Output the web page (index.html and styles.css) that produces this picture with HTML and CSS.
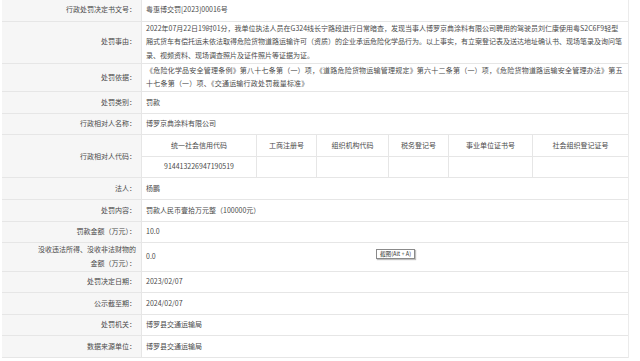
FILE: index.html
```html
<!DOCTYPE html>
<html lang="zh-CN">
<head>
<meta charset="utf-8">
<title>行政处罚决定书</title>
<link rel="stylesheet" href="styles.css">
</head>
<body>
<div class="sheet">
  <div class="row"><div class="lbl">行政处罚决定书文号：</div><div class="val">粤惠博交罚[2023]00016号</div></div>
  <div class="row"><div class="lbl">处罚事由：</div><div class="val"><p class="txt">2022年07月22日19时01分，我单位执法人员在G324线长宁路段进行日常暗查，发现当事人博罗京典涂料有限公司聘用的驾驶员刘仁康使用粤S2C6F9轻型<br>厢式货车有偿托运未依法取得危险货物道路运输许可（资质）的企业承运危险化学品行为。以上事实，有立案登记表及送达地址确认书、现场笔录及询问笔<br>录、视频资料、现场调查照片及证件照片等证据为证。</p></div></div>
  <div class="row"><div class="lbl">处罚依据：</div><div class="val"><p class="txt wide">《危险化学品安全管理条例》第八十七条第（一）项，《道路危险货物运输管理规定》第六十二条第（一）项，《危险货物道路运输安全管理办法》第五<br>十七条第（一）项、《交通运输行政处罚裁量标准》</p></div></div>
  <div class="row"><div class="lbl">处罚类别：</div><div class="val">罚款</div></div>
  <div class="row"><div class="lbl">行政相对人名称：</div><div class="val">博罗京典涂料有限公司</div></div>
  <div class="row"><div class="lbl">行政相对人代码：</div>
    <div class="val codes">
      <div class="cg head">统一社会信用代码</div>
      <div class="cg head">工商注册号</div>
      <div class="cg head">组织机构代码</div>
      <div class="cg head">税务登记号</div>
      <div class="cg head">事业单位证书号</div>
      <div class="cg head">社会组织登记证号</div>
      <div class="cg">914413226947190519</div>
      <div class="cg"></div>
      <div class="cg"></div>
      <div class="cg"></div>
      <div class="cg"></div>
      <div class="cg"></div>
    </div>
  </div>
  <div class="row"><div class="lbl">法人：</div><div class="val">杨鹏</div></div>
  <div class="row"><div class="lbl">处罚内容：</div><div class="val">罚款人民币壹拾万元整（100000元）</div></div>
  <div class="row"><div class="lbl">罚款金额（万元）：</div><div class="val">10.0</div></div>
  <div class="row"><div class="lbl narrow">没收违法所得、没收非法财物的金额（万元）：</div><div class="val">0.0</div></div>
  <div class="row"><div class="lbl">处罚决定日期：</div><div class="val">2023/02/07</div></div>
  <div class="row"><div class="lbl">公示截至期：</div><div class="val">2024/02/07</div></div>
  <div class="row"><div class="lbl">处罚机关：</div><div class="val">博罗县交通运输局</div></div>
  <div class="row"><div class="lbl">数据来源单位：</div><div class="val">博罗县交通运输局</div></div>
  <div class="tip">截图(Alt + A)</div>
</div>
</body>
</html>
```
FILE: styles.css
```css
html, body {
  margin: 0;
  padding: 0;
  background: #ffffff;
}
body {
  font-family: "Noto Sans CJK SC", "Liberation Sans", sans-serif;
  font-size: 7px;
  color: #4a4a4a;
}
.sheet {
  position: relative;
  width: 627px;
  margin-left: 2px;
  border-right: 1px solid #ebebeb;
  box-sizing: border-box;
}
.row {
  display: flex;
  border-bottom: 1px solid #e6e6e6;
}
.lbl {
  width: 140px;
  flex: none;
  box-sizing: border-box;
  background: #f6f6f6;
  border-right: 1px solid #e6e6e6;
  display: flex;
  align-items: center;
  justify-content: flex-end;
  text-align: right;
  padding: 0 5px 0 8px;
  min-height: 20.6px;
  line-height: 13.7px;
}
.lbl.narrow {
  padding-left: 33px;
}
.val {
  flex: 1;
  display: flex;
  align-items: center;
  padding: 0 3px 0 4px;
  min-height: 20.6px;
  line-height: 13.7px;
}
.txt {
  margin: 0;
}
.txt.wide {
  letter-spacing: 0.22px;
}
.codes {
  display: grid;
  grid-template-columns: 115px 60px 72px 60px 84px 1fr;
  padding: 0;
  align-items: stretch;
}
.cg {
  display: flex;
  align-items: center;
  justify-content: center;
  min-height: 20.6px;
  border-right: 1px solid #e6e6e6;
}
.cg:nth-child(6n) {
  border-right: none;
}
.cg.head {
  border-bottom: 1px solid #e6e6e6;
}
.tip {
  position: absolute;
  left: 374px;
  top: 249px;
  font-size: 5.6px;
  line-height: 8px;
  padding: 0 3px;
  background: #ffffff;
  border: 1px solid #8a8a8a;
  box-shadow: 1px 1px 1px rgba(0,0,0,0.25);
  color: #333333;
  white-space: nowrap;
}
```
